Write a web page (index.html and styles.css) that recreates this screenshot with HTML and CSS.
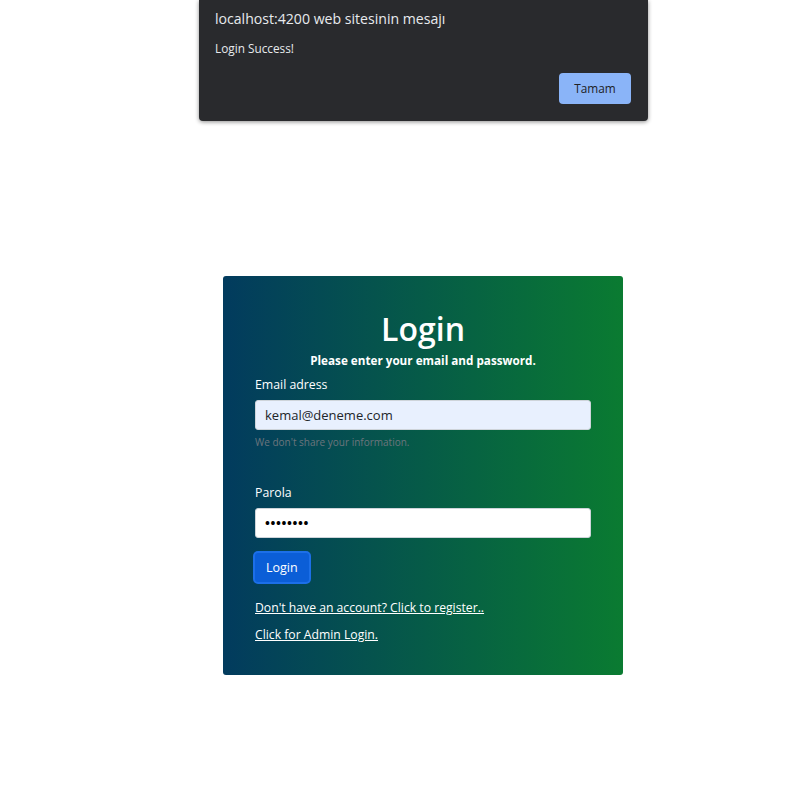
FILE: index.html
```html
<!DOCTYPE html>
<html>
<head>
<meta charset="utf-8">
<link rel="stylesheet" href="styles.css">
</head>
<body>
<div class="dialog">
  <div class="dialog-title">localhost:4200 web sitesinin mesajı</div>
  <div class="dialog-msg">Login Success!</div>
  <div class="dialog-actions"><button class="dialog-btn">Tamam</button></div>
</div>
<main class="page">
  <form class="card">
    <h1 class="title">Login</h1>
    <p class="subtitle">Please enter your email and password.</p>
    <label class="label">Email adress</label>
    <div class="input autofill">kemal@deneme.com</div>
    <div class="help">We don't share your information.</div>
    <label class="label label-pw">Parola</label>
    <div class="input pw">••••••••</div>
    <button type="button" class="btn">Login</button>
    <a class="link link-first" href="#">Don't have an account? Click to register..</a>
    <a class="link" href="#">Click for Admin Login.</a>
  </form>
</main>
</body>
</html>
```
FILE: styles.css
```css
* { box-sizing: border-box; }
html, body { margin: 0; padding: 0; background: #fff; }
body { font-family: "Open Sans", "Noto Sans", sans-serif; width: 792px; height: 787px; overflow: hidden; position: relative; }

.dialog {
  position: absolute; left: 199px; top: 0; width: 449px; height: 121px;
  background: #292a2d; border-radius: 0 0 4px 4px;
  box-shadow: 0 1px 4px rgba(0,0,0,.45);
  padding: 10px 16px 0 16px; color: #e8eaed;
  display: flex; flex-direction: column;
}
.dialog-title { font-size: 14.1px; line-height: 18px; color: #e8eaed; }
.dialog-msg { font-size: 11.8px; line-height: 16px; margin-top: 12px; color: #e8eaed; }
.dialog-actions { display: flex; justify-content: flex-end; margin-top: 17px; padding-right: 1px; }
.dialog-btn {
  width: 72px; height: 31px; border: 0; border-radius: 4px; background: #8ab4f8;
  color: #202124; font-family: inherit; font-size: 11.8px; padding: 0 0 2px;
}

.page { display: flex; justify-content: center; padding-top: 276px; }
.card {
  width: 400px; height: 399px; margin-left: 54px;
  border-radius: 3px;
  background: linear-gradient(90deg, #023b5e 0%, #0a7b31 100%);
  padding: 33px 32px 0 32px; color: #fff;
  display: flex; flex-direction: column; align-items: flex-start;
}
.title { margin: 0; align-self: stretch; text-align: center; font-size: 32px; line-height: 40px; font-weight: 600; }
.subtitle { margin: 3px 0 0; align-self: stretch; text-align: center; font-size: 11.7px; font-weight: 700; line-height: 17px; }
.label { font-size: 12.3px; line-height: 18px; margin-top: 7px; }
.label-pw { margin-top: 35px; }
.input {
  width: 336px; height: 30px; margin-top: 6px; border: 1px solid #ced4da; border-radius: 3px;
  background: #fff; color: #212529; font-size: 13px; line-height: 28px; padding: 0 9px;
}
.autofill { background: #e8f0fe; }
.pw { font-size: 13px; font-weight: 700; letter-spacing: 0.6px; color: #000; }
.help { font-size: 10px; line-height: 14px; margin-top: 5px; color: #6c757d; }
.btn {
  margin-top: 13px; margin-left: -2px; height: 33px; padding: 0 11px;
  background: #0b5ed7; color: #fff; border: 2px solid rgba(49,132,253,.45); border-radius: 5px;
  font-family: inherit; font-size: 12.5px;
}
.link { color: #fff; text-decoration: underline; font-size: 12.2px; line-height: 18px; }
.link-first { margin-top: 15px; }
.link + .link { margin-top: 9px; }
```
